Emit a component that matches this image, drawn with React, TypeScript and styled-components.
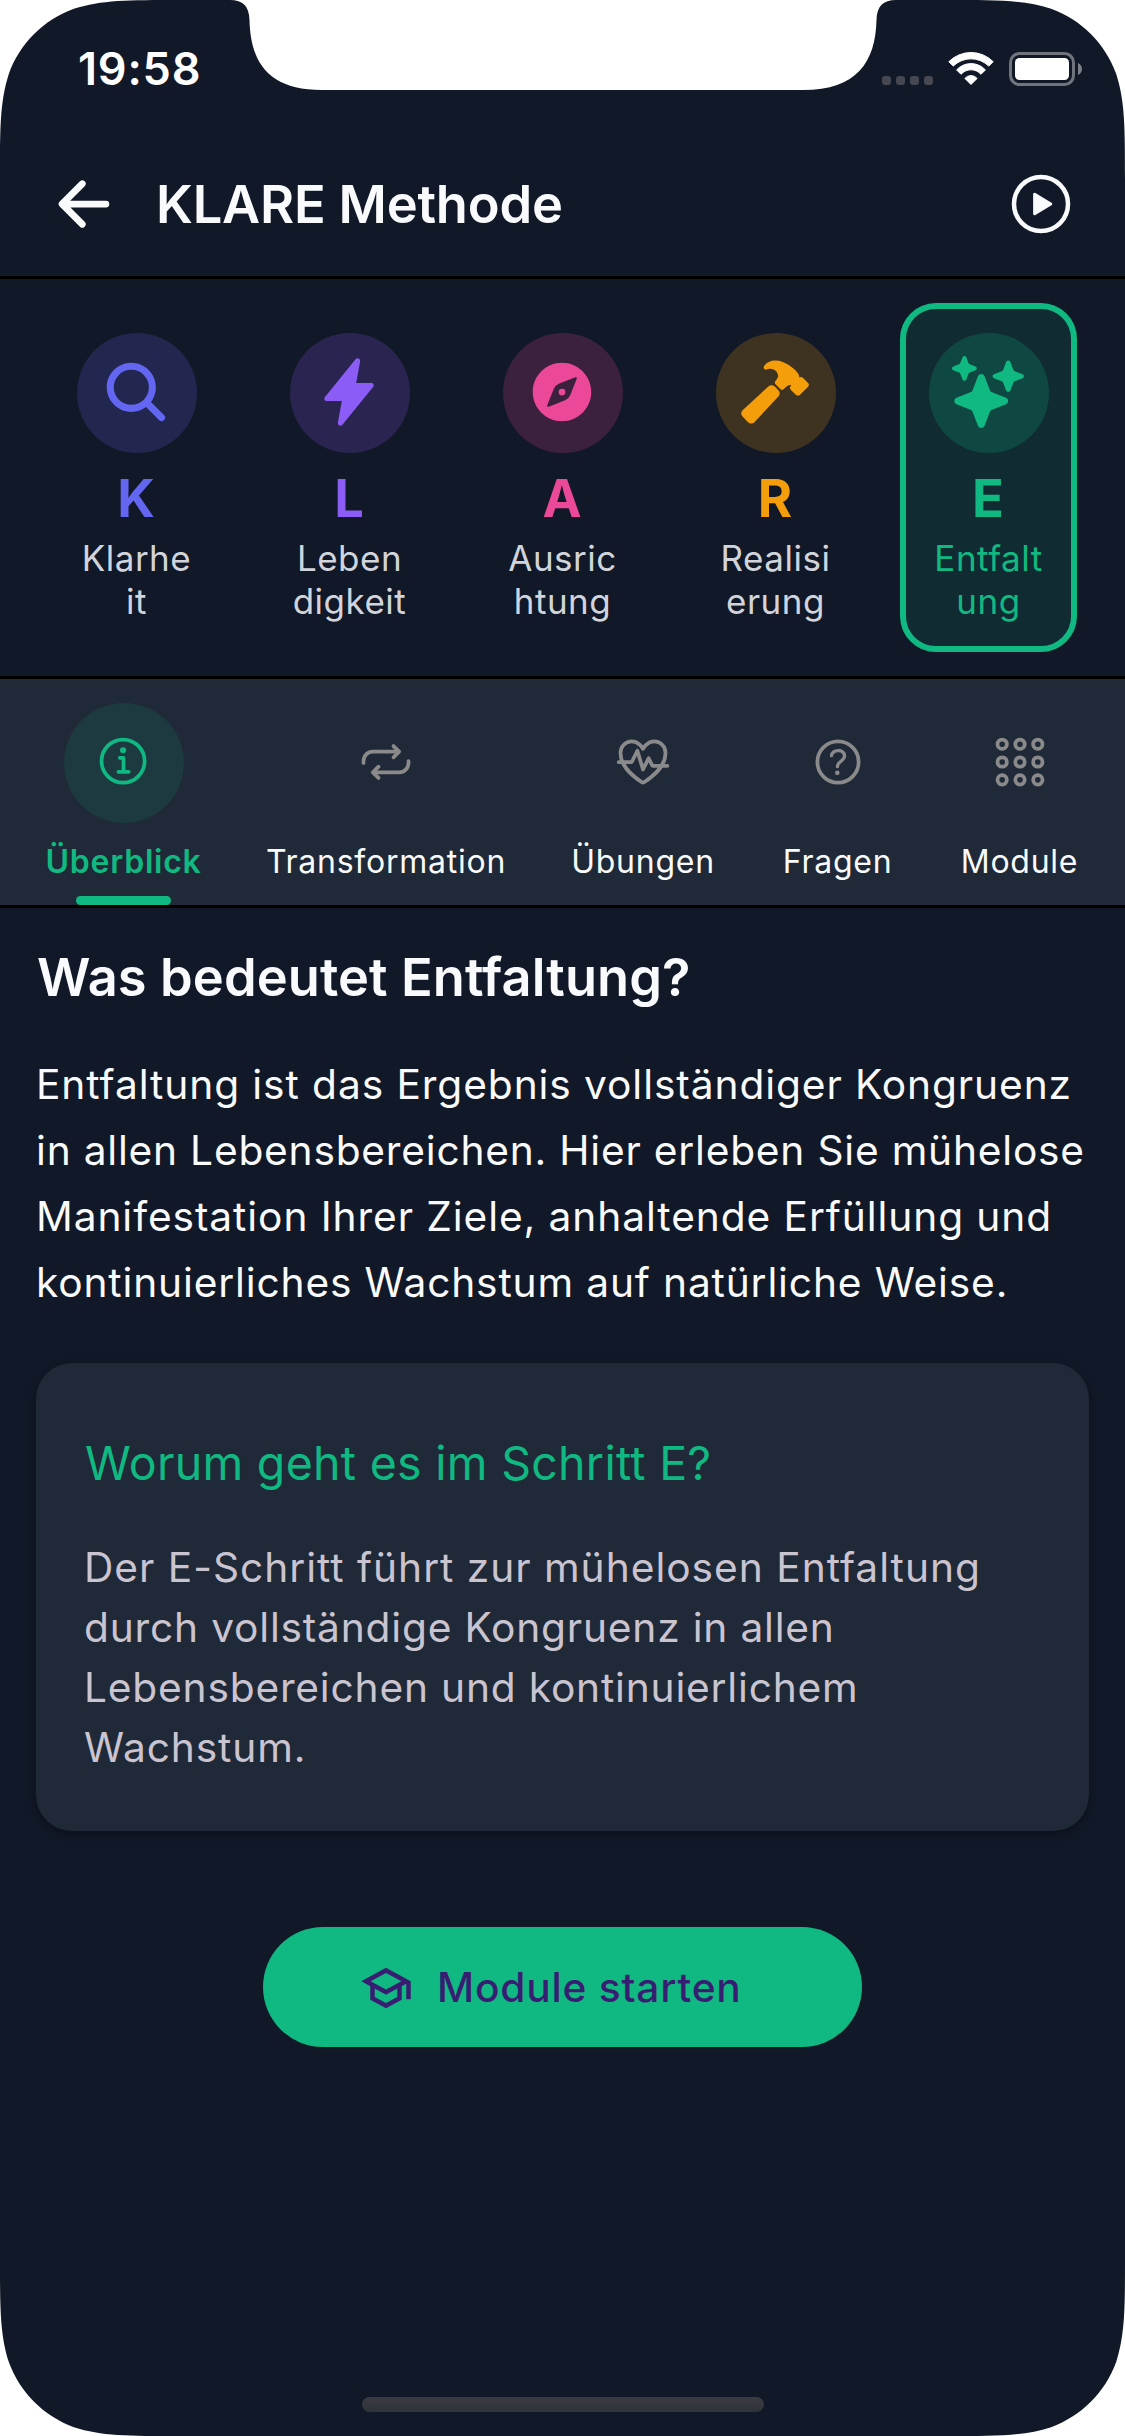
import React from 'react';
import styled, { createGlobalStyle } from 'styled-components';
import type { IconType } from 'react-icons';
import {
  IoArrowBack, IoPlayCircleOutline, IoSearch, IoFlash, IoCompass, IoHammer, IoSparkles,
  IoInformationCircleOutline, IoRepeatOutline, IoFitnessOutline, IoHelpCircleOutline,
} from 'react-icons/io5';
import { MdOutlineSchool } from 'react-icons/md';

const color = {
  background: '#111827',
  surface: '#1f2937',
  divider: '#000000',
  text: '#f9fafb',
  textMuted: '#d1d5db',
  textVariant: '#cac4d0',
  accent: '#10b981',
  iconIdle: '#8a8a8a',
  onAccent: '#381e72',
};

const GlobalStyle = createGlobalStyle`
  * { box-sizing: border-box; }
  body {
    margin: 0;
    background: #ffffff;
    font-family: Inter, 'Liberation Sans', sans-serif;
  }
`;

const Screen = styled.div`
  position: relative;
  display: flex;
  flex-direction: column;
  width: 1125px;
  height: 2436px;
  overflow: hidden;
  background: ${color.background};
  color: ${color.text};
`;

const Bezel = styled.svg`
  position: absolute;
  inset: 0;
  pointer-events: none;
`;

const StatusBar = styled.div`
  display: flex;
  justify-content: space-between;
  align-items: flex-start;
  height: 132px;
  padding: 42px 43px 0 78px;
`;

const Clock = styled.div`
  font-size: 45px;
  font-weight: 600;
  line-height: 54px;
  letter-spacing: 0.8px;
  color: #ffffff;
`;

const StatusIcons = styled.svg`
  display: block;
  margin-top: 8px;
`;

const Header = styled.header`
  display: flex;
  align-items: center;
  height: 147px;
  padding: 0 48px;
  border-bottom: 3px solid ${color.divider};
`;

const IconButton = styled.button`
  display: flex;
  padding: 0;
  border: 0;
  background: none;
  color: ${color.text};
  font-size: 72px;
`;

const Title = styled.h1`
  flex: 1;
  margin: 0 0 0 36px;
  font-size: 52.4px;
  font-weight: 600;
  line-height: 66px;
  letter-spacing: -0.19px;
`;

const StepRow = styled.nav`
  display: flex;
  justify-content: space-between;
  height: 400px;
  padding: 24px 48px;
  border-bottom: 3px solid ${color.divider};
`;

const StepCard = styled.div<{ $tint: string; $active: boolean }>`
  display: flex;
  flex-direction: column;
  align-items: center;
  width: 177px;
  height: 349px;
  padding: 24px;
  border: 6px solid ${p => (p.$active ? p.$tint : 'transparent')};
  border-radius: 36px;
  background: ${p => (p.$active ? `${p.$tint}20` : 'transparent')};
  background-clip: padding-box;
`;

const StepCircle = styled.div<{ $tint: string }>`
  display: flex;
  flex: none;
  align-items: center;
  justify-content: center;
  width: 120px;
  height: 120px;
  padding: 0 2px 2px 0;
  border-radius: 50%;
  background: ${p => p.$tint}33;
  color: ${p => p.$tint};
  font-size: 72px;
`;

const StepLetter = styled.div<{ $tint: string }>`
  margin-top: 15px;
  padding-right: 1px;
  font-size: 52.4px;
  font-weight: 700;
  line-height: 60px;
  color: ${p => p.$tint};
`;

const StepLabel = styled.div<{ $color: string }>`
  margin-top: 9px;
  font-size: 35px;
  line-height: 43px;
  letter-spacing: 0.5px;
  text-align: center;
  white-space: pre;
  color: ${p => p.$color};
`;

const TabBar = styled.nav`
  display: grid;
  grid-template-columns: 247px 278px 236px 153px 211px;
  height: 229px;
  background: ${color.surface};
  border-bottom: 3px solid ${color.divider};
`;

const Tab = styled.div`
  display: flex;
  flex-direction: column;
  align-items: center;
  padding-top: 24px;
`;

const TabIcon = styled.div<{ $active: boolean }>`
  display: flex;
  align-items: center;
  justify-content: center;
  width: 120px;
  height: 120px;
  padding-bottom: 2px;
  border-radius: 50%;
  background: ${p => (p.$active ? `${color.accent}1f` : 'transparent')};
  color: ${p => (p.$active ? color.accent : color.iconIdle)};
  font-size: 60px;
`;

const TabLabel = styled.div<{ $active: boolean }>`
  margin-top: 19px;
  font-size: 32px;
  font-weight: ${p => (p.$active ? 600 : 400)};
  line-height: 39px;
  letter-spacing: 0.75px;
  white-space: nowrap;
  color: ${p => (p.$active ? color.accent : color.text)};
`;

const TabIndicator = styled.div`
  width: 95px;
  height: 9px;
  margin-top: 15px;
  border-radius: 4.5px;
  background: ${color.accent};
`;

const Content = styled.main`
  display: flex;
  flex: 1;
  flex-direction: column;
  padding: 36px 36px 0;
`;

const Heading = styled.h2`
  margin: 0;
  padding-left: 1px;
  font-size: 52.4px;
  font-weight: 600;
  line-height: 66px;
  letter-spacing: 0.1px;
`;

const Lead = styled.p`
  margin: 42px 0 0;
  font-size: 40.7px;
  line-height: 66px;
`;

const Line = styled.span<{ $tracking: number }>`
  display: block;
  letter-spacing: ${p => p.$tracking}px;
  white-space: nowrap;
`;

const InfoCard = styled.section`
  height: 468px;
  margin-top: 47px;
  padding: 67px 48px 0;
  border-radius: 36px;
  background: ${color.surface};
  box-shadow: 0 3px 9px rgba(0, 0, 0, 0.32);
`;

const CardTitle = styled.h3`
  margin: 0;
  padding-left: 1px;
  font-size: 46.5px;
  font-weight: 400;
  line-height: 66px;
  letter-spacing: 0.28px;
  color: ${color.accent};
`;

const CardText = styled.p`
  margin: 42px 0 0;
  font-size: 40.7px;
  line-height: 60px;
  color: ${color.textVariant};
`;

const StartButton = styled.button`
  display: flex;
  align-items: center;
  align-self: center;
  gap: 24px;
  width: 599px;
  height: 120px;
  margin-top: 96px;
  padding: 1px 0 0 96px;
  border: 0;
  border-radius: 60px;
  background: ${color.accent};
  color: ${color.onAccent};
  font-family: inherit;
  font-size: 40.7px;
  font-weight: 500;
  line-height: 60px;
  letter-spacing: 0.78px;
`;

const HomeIndicator = styled.div`
  align-self: center;
  width: 402px;
  height: 15px;
  margin-bottom: 24px;
  border-radius: 7.5px;
  background: linear-gradient(#3b3b40, #2e343a);
`;

const AppsRings = () => (
  <svg width="1em" height="1em" viewBox="0 0 512 512" fill="none" stroke="currentColor" strokeWidth="32">
    {[104, 256, 408].map(cy =>
      [104, 256, 408].map(cx => <circle key={`${cx}-${cy}`} cx={cx} cy={cy} r="40" />),
    )}
  </svg>
);

interface Step {
  letter: string;
  label: string;
  tint: string;
  icon: IconType;
}

const steps: Step[] = [
  { letter: 'K', label: 'Klarhe\nit', tint: '#6366f1', icon: IoSearch },
  { letter: 'L', label: 'Leben\ndigkeit', tint: '#8b5cf6', icon: IoFlash },
  { letter: 'A', label: 'Ausric\nhtung', tint: '#ec4899', icon: IoCompass },
  { letter: 'R', label: 'Realisi\nerung', tint: '#f59e0b', icon: IoHammer },
  { letter: 'E', label: 'Entfalt\nung', tint: '#10b981', icon: IoSparkles },
];

const tabs: { label: string; icon: React.ComponentType }[] = [
  { label: 'Überblick', icon: IoInformationCircleOutline },
  { label: 'Transformation', icon: IoRepeatOutline },
  { label: 'Übungen', icon: IoFitnessOutline },
  { label: 'Fragen', icon: IoHelpCircleOutline },
  { label: 'Module', icon: AppsRings },
];

const leadLines: [string, number][] = [
  ['Entfaltung ist das Ergebnis vollständiger Kongruenz', 0.91],
  ['in allen Lebensbereichen. Hier erleben Sie mühelose', 0.78],
  ['Manifestation Ihrer Ziele, anhaltende Erfüllung und', 0.91],
  ['kontinuierliches Wachstum auf natürliche Weise.', 0.84],
];

const cardLines: [string, number][] = [
  ['Der E-Schritt führt zur mühelosen Entfaltung', 0.98],
  ['durch vollständige Kongruenz in allen', 0.8],
  ['Lebensbereichen und kontinuierlichem', 0.8],
  ['Wachstum.', 0.88],
];

const activeStep = 'E';
const activeTab = 'Überblick';

export default function App() {
  return (
    <>
      <GlobalStyle />
      <Screen>
        <StatusBar>
          <Clock>19:58</Clock>
          <StatusIcons width="200" height="38" viewBox="0 0 200 38" fill="none">
            <g fill="#454752">
              {[0, 14, 28, 42].map(x => (
                <rect key={x} x={x} y="26" width="9" height="9" rx="3" />
              ))}
            </g>
            <g fill="#ffffff" stroke="#ffffff" strokeWidth="1" strokeLinejoin="round">
              <path d="M66.800 11.700A31.400 31.400 0 0 1 111.200 11.700L106.800 16.100A25.400 25.400 0 0 0 71.200 16.100Z" />
              <path d="M74.600 19.900A19.600 19.600 0 0 1 103.400 19.900L99 24.300A13.300 13.300 0 0 0 79 24.300Z" />
              <path d="M82.900 28.400A8 8 0 0 1 95.100 28.400L89 34.500Z" />
            </g>
            <rect x="128.500" y="3.500" width="63" height="31" rx="9" stroke="#70747d" strokeWidth="3" />
            <rect x="133" y="8" width="54" height="22" rx="4.500" fill="#ffffff" />
            <path d="M196 13c2.400 1 4 3.400 4 6s-1.600 5-4 6z" fill="#7c8088" />
          </StatusIcons>
        </StatusBar>

        <Header>
          <IconButton aria-label="Zurück"><IoArrowBack /></IconButton>
          <Title>KLARE Methode</Title>
          <IconButton aria-label="Abspielen"><IoPlayCircleOutline /></IconButton>
        </Header>

        <StepRow>
          {steps.map(({ letter, label, tint, icon: Icon }) => {
            const active = letter === activeStep;
            return (
              <StepCard key={letter} $tint={tint} $active={active}>
                <StepCircle $tint={tint}><Icon /></StepCircle>
                <StepLetter $tint={tint}>{letter}</StepLetter>
                <StepLabel $color={active ? tint : color.textMuted}>{label}</StepLabel>
              </StepCard>
            );
          })}
        </StepRow>

        <TabBar>
          {tabs.map(({ label, icon: Icon }) => {
            const active = label === activeTab;
            return (
              <Tab key={label}>
                <TabIcon $active={active}><Icon /></TabIcon>
                <TabLabel $active={active}>{label}</TabLabel>
                {active && <TabIndicator />}
              </Tab>
            );
          })}
        </TabBar>

        <Content>
          <Heading>Was bedeutet Entfaltung?</Heading>
          <Lead>
            {leadLines.map(([text, tracking]) => (
              <Line key={text} $tracking={tracking}>{text}</Line>
            ))}
          </Lead>
          <InfoCard>
            <CardTitle>Worum geht es im Schritt E?</CardTitle>
            <CardText>
              {cardLines.map(([text, tracking]) => (
                <Line key={text} $tracking={tracking}>{text}</Line>
              ))}
            </CardText>
          </InfoCard>
          <StartButton>
            <MdOutlineSchool size={54} />
            Module starten
          </StartButton>
        </Content>

        <HomeIndicator />

        <Bezel width="1125" height="2436" viewBox="0 0 1125 2436" fill="#ffffff">
          <defs>
            <path
              id="corner"
              d="M0 0H178.900C127.400 0 101.600 0 73.900 8.800C43.600 19.800 19.800 43.600 8.800 73.900C0 101.600 0 127.400 0 178.900Z"
            />
          </defs>
          <use href="#corner" />
          <use href="#corner" transform="translate(1125 0) scale(-1 1)" />
          <use href="#corner" transform="translate(0 2436) scale(1 -1)" />
          <use href="#corner" transform="translate(1125 2436) scale(-1 -1)" />
          <path d="M230 0C243 0 249 6 249.500 20C250.500 62 268 90 322 90H803C857 90 875.500 62 876.500 20C877 6 883 0 896 0Z" />
        </Bezel>
      </Screen>
    </>
  );
}
